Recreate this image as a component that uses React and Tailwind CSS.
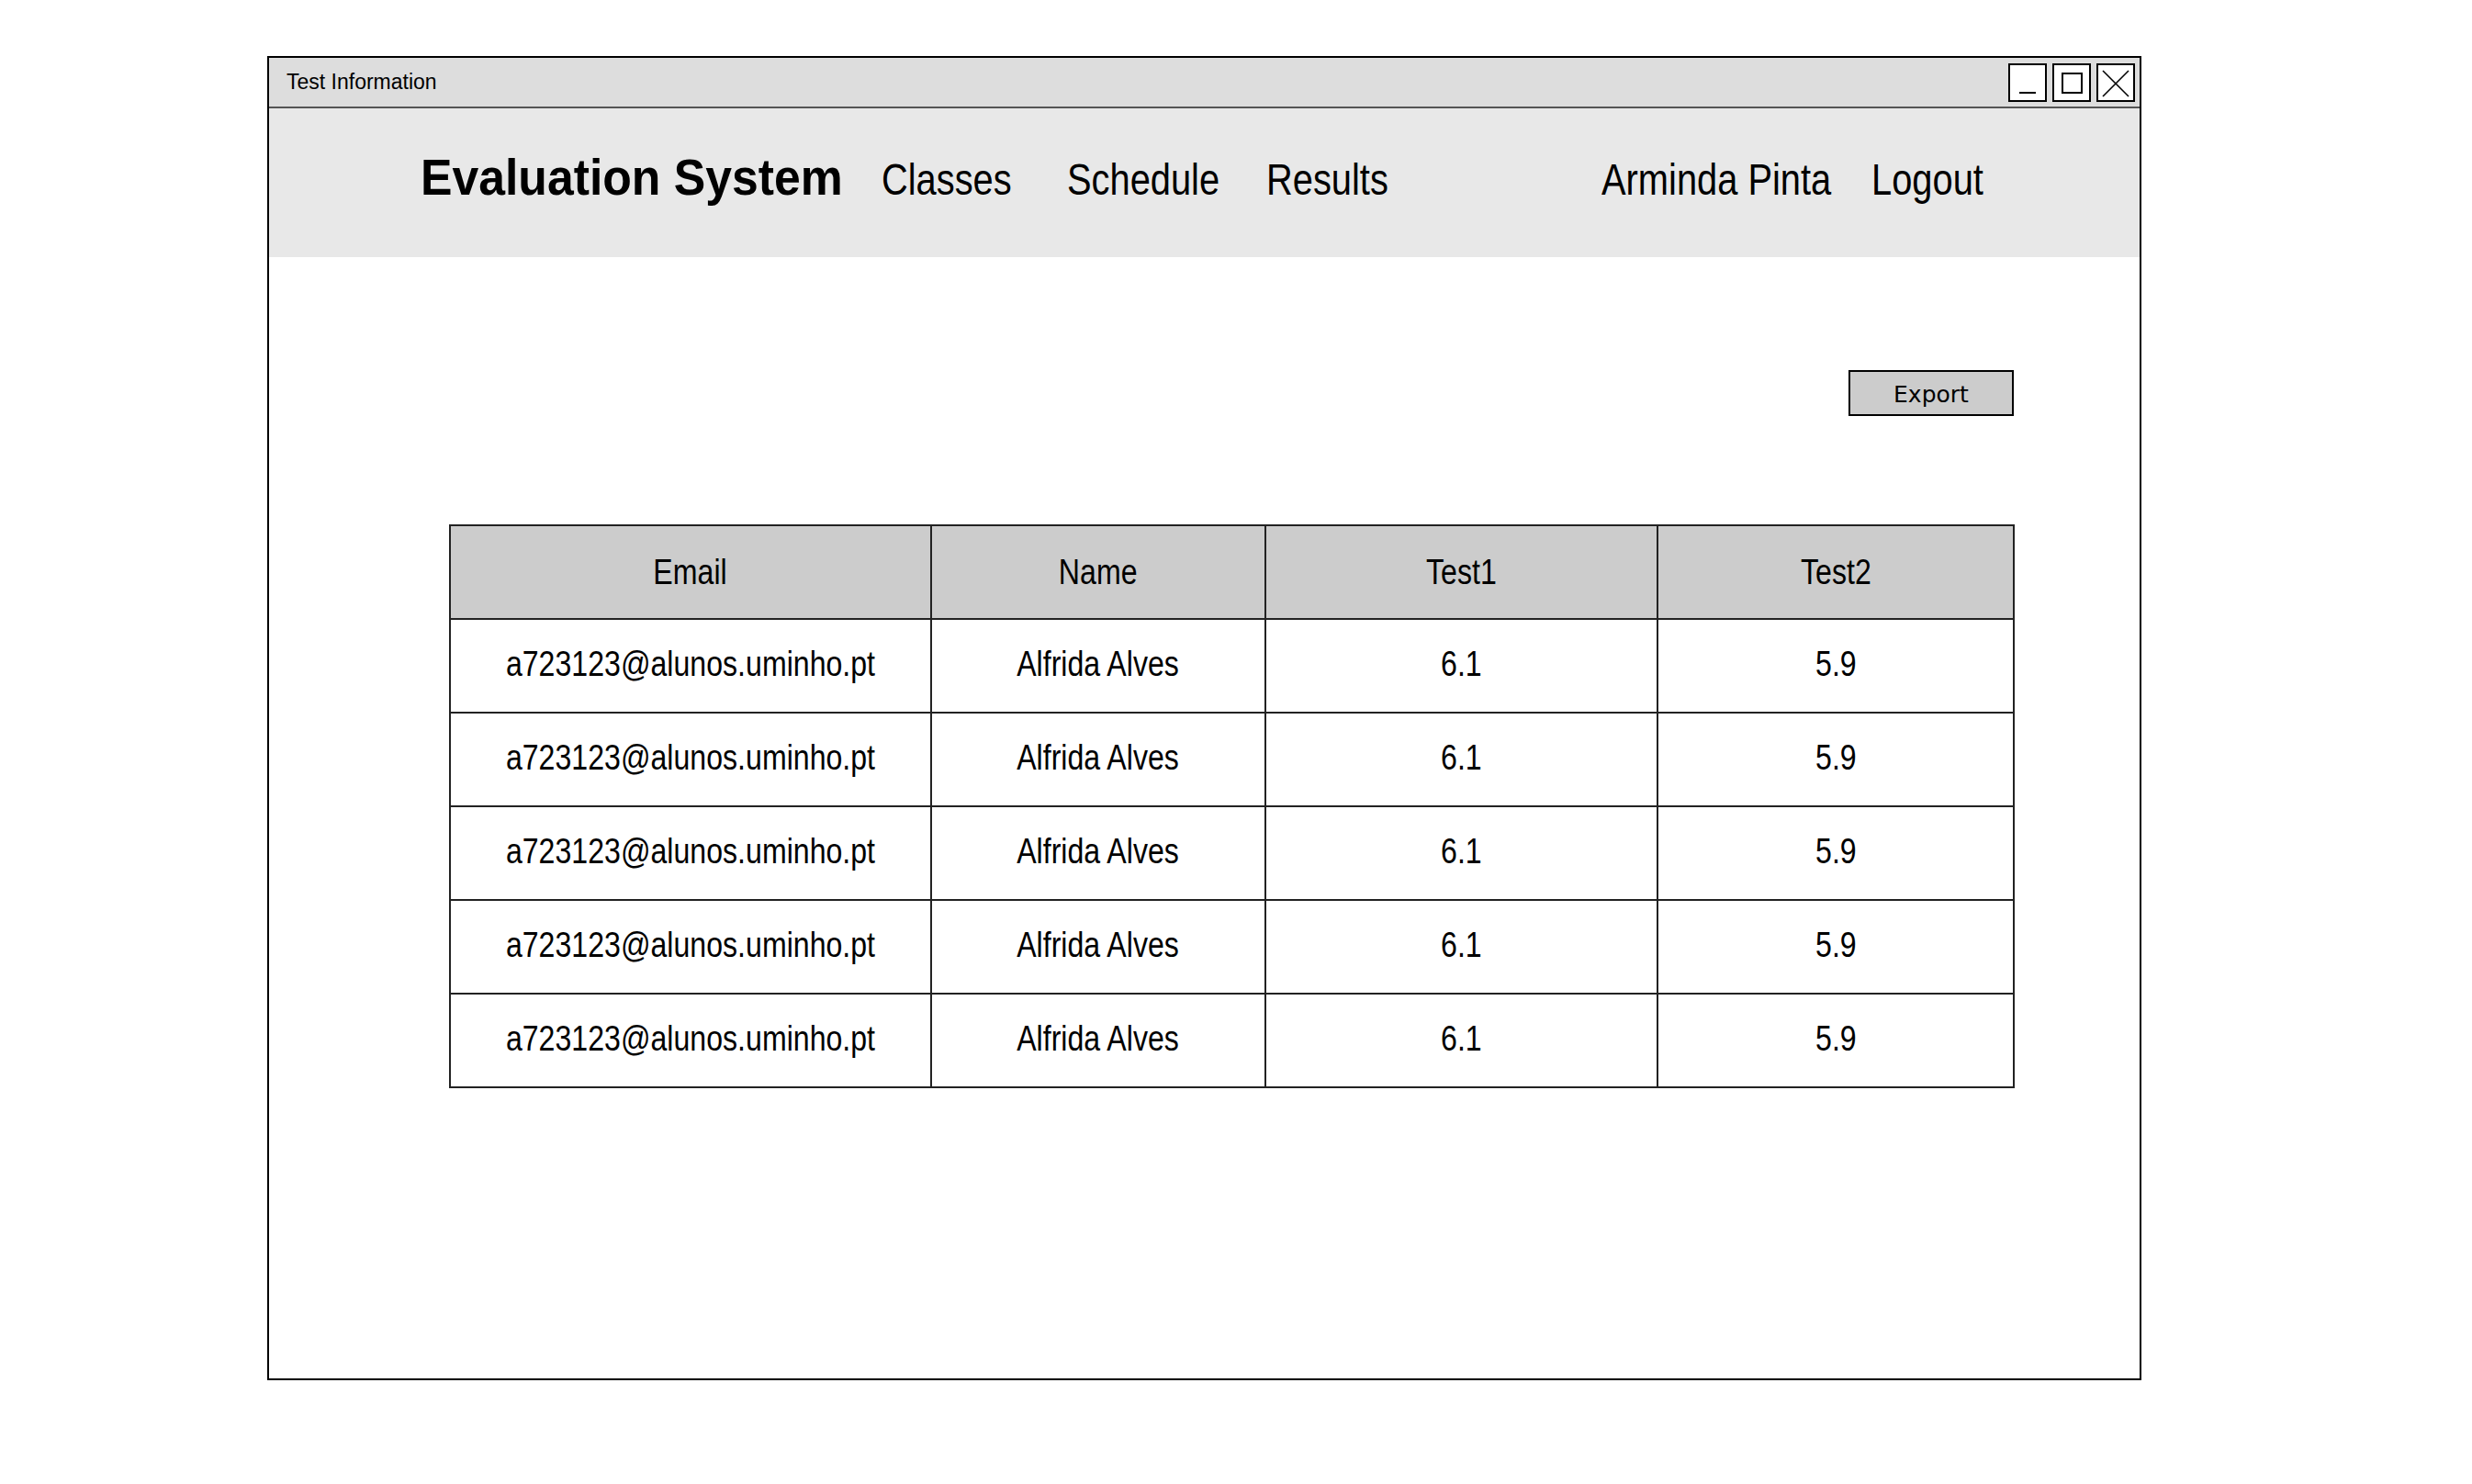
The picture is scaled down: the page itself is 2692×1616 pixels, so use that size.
import React from 'react';

const rows = Array.from({ length: 5 }, () => ({
  email: 'a723123@alunos.uminho.pt',
  name: 'Alfrida Alves',
  t1: '6.1',
  t2: '5.9',
}));

function WinButton({ children }) {
  return (
    <div className="w-[42px] h-[42px] border-2 border-black bg-white flex items-center justify-center">
      <svg width="38" height="38" viewBox="0 0 38 38" fill="none" stroke="black">
        {children}
      </svg>
    </div>
  );
}

// the mockup text is a narrow Helvetica, squeeze Liberation Sans to match
function Narrow({ children, className = '' }) {
  return <span className={`inline-block whitespace-nowrap ${className}`}>{children}</span>;
}

function Cell({ children, head }) {
  return (
    <td className={`border-2 border-[#222222] text-center ${head ? 'bg-[#cccccc]' : 'pb-[4px]'}`}>
      <Narrow className="scale-x-[0.845]">{children}</Narrow>
    </td>
  );
}

export default function App() {
  return (
    <div className="min-h-screen w-full bg-white text-black font-['Liberation_Sans',Arial,sans-serif]">
      <div className="pl-[291px] pt-[61px]">
        <div className="w-[2041px] h-[1442px] border-2 border-black flex flex-col">
          {/* title bar */}
          <div className="h-[55px] bg-[#dddddd] border-b-2 border-[#555555] flex items-center justify-between pl-[19px] pr-[5px]">
            <span className="text-[23px]">Test Information</span>
            <div className="flex gap-[6px]">
              <WinButton>
                <line x1="10" y1="30" x2="28" y2="30" strokeWidth="2" />
              </WinButton>
              <WinButton>
                <rect x="9" y="9" width="21" height="21" strokeWidth="2" />
              </WinButton>
              <WinButton>
                <line x1="5" y1="6" x2="33" y2="34" strokeWidth="1.6" />
                <line x1="33" y1="6" x2="5" y2="34" strokeWidth="1.6" />
              </WinButton>
            </div>
          </div>

          {/* app header */}
          <div className="h-[162px] bg-[#e8e8e8] flex items-baseline pl-[165px] pt-[42px] text-[48px]">
            <div className="w-[502px] shrink-0 font-bold text-[55px] leading-none">
              <Narrow className="scale-x-[0.94] origin-left">Evaluation System</Narrow>
            </div>
            <div className="w-[202px] shrink-0">
              <Narrow className="scale-x-[0.83] origin-left">Classes</Narrow>
            </div>
            <div className="w-[217px] shrink-0">
              <Narrow className="scale-x-[0.83] origin-left">Schedule</Narrow>
            </div>
            <div className="w-[365px] shrink-0">
              <Narrow className="scale-x-[0.83] origin-left">Results</Narrow>
            </div>
            <div className="w-[294px] shrink-0">
              <Narrow className="scale-x-[0.83] origin-left">Arminda Pinta</Narrow>
            </div>
            <div className="shrink-0">
              <Narrow className="scale-x-[0.83] origin-left">Logout</Narrow>
            </div>
          </div>

          {/* content */}
          <div className="flex-1 flex flex-col pl-[196px] pr-[137px] pt-[123px]">
            <div className="flex justify-end">
              <button className="w-[180px] h-[50px] bg-[#cccccc] border-2 border-black pt-[3px] text-[25px] font-['Comic_Sans_MS','DejaVu_Sans',sans-serif]">
                Export
              </button>
            </div>

            <table className="mt-[118px] w-[1703px] table-fixed border-collapse text-[38px]">
              <colgroup>
                <col className="w-[524px]" />
                <col className="w-[364px]" />
                <col className="w-[427px]" />
                <col className="w-[388px]" />
              </colgroup>
              <thead>
                <tr className="h-[102px]">
                  <Cell head>Email</Cell>
                  <Cell head>Name</Cell>
                  <Cell head>Test1</Cell>
                  <Cell head>Test2</Cell>
                </tr>
              </thead>
              <tbody>
                {rows.map((r, i) => (
                  <tr key={i} className="h-[102px]">
                    <Cell>{r.email}</Cell>
                    <Cell>{r.name}</Cell>
                    <Cell>{r.t1}</Cell>
                    <Cell>{r.t2}</Cell>
                  </tr>
                ))}
              </tbody>
            </table>
          </div>
        </div>
      </div>
    </div>
  );
}
